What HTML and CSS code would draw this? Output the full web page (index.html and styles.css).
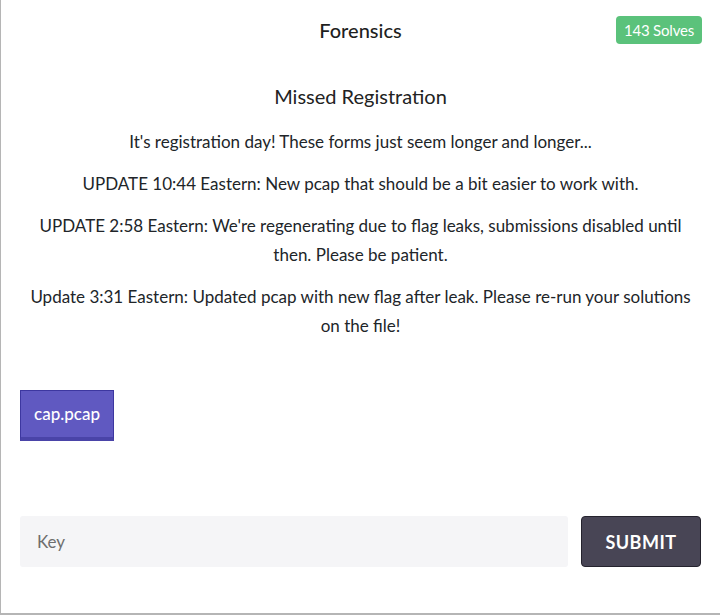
FILE: index.html
```html
<!DOCTYPE html>
<html>
<head>
<meta charset="utf-8">
<link rel="stylesheet" href="styles.css">
</head>
<body>
<div class="modal">
  <div class="header">
    <div></div>
    <h3 class="category">Forensics</h3>
    <span class="badge">143 Solves</span>
  </div>
  <h2 class="name">Missed Registration</h2>
  <div class="desc">
    <p>It's registration day! These forms just seem longer and longer...</p>
    <p>UPDATE 10:44 Eastern: New pcap that should be a bit easier to work with.</p>
    <p>UPDATE 2:58 Eastern: We're regenerating due to flag leaks, submissions disabled until then. Please be patient.</p>
    <p>Update 3:31 Eastern: Updated pcap with new flag after leak. Please re-run your solutions on the file!</p>
  </div>
  <div class="files">
    <a class="file-btn">cap.pcap</a>
  </div>
  <div class="submit-row">
    <input class="key" type="text" placeholder="Key">
    <button class="submit">SUBMIT</button>
  </div>
</div>
</body>
</html>
```

FILE: styles.css
```css
html, body {
  margin: 0;
  padding: 0;
}
body {
  background: #b5b5b5;
  width: 720px;
  height: 615px;
  overflow: hidden;
  font-family: Lato, "Open Sans", sans-serif;
  color: #212529;
}
.modal {
  margin-left: 1px;
  width: 719px;
  height: 613px;
  box-sizing: border-box;
  background: #fff;
  padding: 16px 19px 0 19px;
}
.header {
  display: grid;
  grid-template-columns: 1fr auto 1fr;
  align-items: center;
}
.category {
  margin: 0;
  font-size: 20px;
  font-weight: 500;
  line-height: 24px;
  color: #1f1f1f;
}
.badge {
  justify-self: end;
  margin-right: -1px;
  background: #5bc27b;
  color: #fff;
  font-size: 15px;
  line-height: 28px;
  height: 28px;
  padding: 0 8px;
  border-radius: 4px;
  letter-spacing: -0.2px;
}
.name {
  margin: 40px 0 0 0;
  text-align: center;
  font-size: 20px;
  font-weight: 400;
  line-height: 24px;
  color: #222;
}
.desc {
  margin-top: 18.5px;
  text-align: center;
  font-size: 17px;
  line-height: 29px;
}
.desc p {
  margin: 0 0 13px 0;
}
.desc p:last-child {
  margin-bottom: 0;
}
.files {
  margin-top: 50.5px;
  display: flex;
}
.file-btn {
  display: block;
  box-sizing: border-box;
  width: 94px;
  height: 51px;
  background: #6059c1;
  border: 1px solid #3d37a0;
  border-bottom: 4px solid #4a44a8;
  color: #fff;
  font-family: Lato, sans-serif;
  font-size: 17px;
  font-weight: 500;
  line-height: 45px;
  text-align: center;
}
.submit-row {
  margin-top: 75px;
  display: flex;
  gap: 13px;
}
.key {
  flex: 1;
  height: 51px;
  box-sizing: border-box;
  border: none;
  background: #f5f5f7;
  border-radius: 3px;
  padding: 0 17px;
  font-family: Lato, sans-serif;
  font-size: 17px;
  color: #333;
  outline: none;
}
.key::placeholder {
  color: #6e6e6e;
}
.submit {
  width: 120px;
  height: 51px;
  box-sizing: border-box;
  background: #484555;
  border: 1px solid #25232e;
  border-radius: 4px;
  color: #fff;
  font-family: Lato, sans-serif;
  font-weight: 700;
  font-size: 18px;
  letter-spacing: 0.5px;
}
```
